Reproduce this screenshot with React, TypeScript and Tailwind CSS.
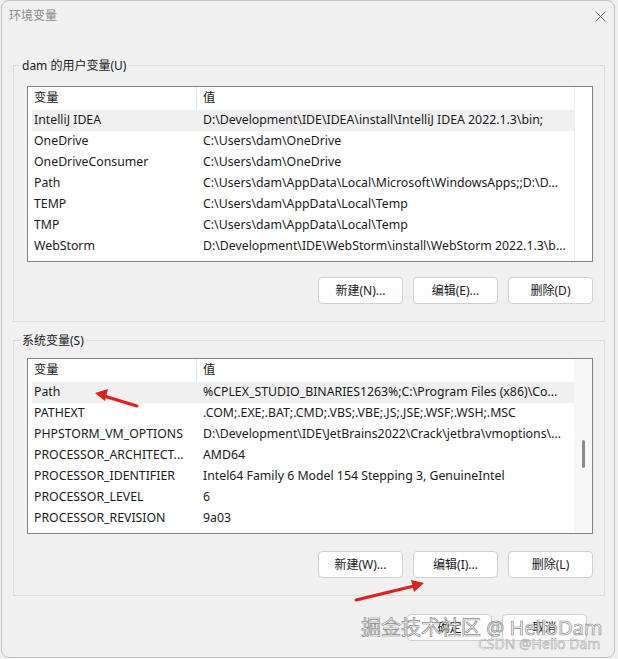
import React from "react";

type Row = { name: string; value: string };

const userVars: Row[] = [
  { name: "IntelliJ IDEA", value: "D:\\Development\\IDE\\IDEA\\install\\IntelliJ IDEA 2022.1.3\\bin;" },
  { name: "OneDrive", value: "C:\\Users\\dam\\OneDrive" },
  { name: "OneDriveConsumer", value: "C:\\Users\\dam\\OneDrive" },
  { name: "Path", value: "C:\\Users\\dam\\AppData\\Local\\Microsoft\\WindowsApps;;D:\\D..." },
  { name: "TEMP", value: "C:\\Users\\dam\\AppData\\Local\\Temp" },
  { name: "TMP", value: "C:\\Users\\dam\\AppData\\Local\\Temp" },
  { name: "WebStorm", value: "D:\\Development\\IDE\\WebStorm\\install\\WebStorm 2022.1.3\\b..." },
];

const systemVars: Row[] = [
  { name: "Path", value: "%CPLEX_STUDIO_BINARIES1263%;C:\\Program Files (x86)\\Co..." },
  { name: "PATHEXT", value: ".COM;.EXE;.BAT;.CMD;.VBS;.VBE;.JS;.JSE;.WSF;.WSH;.MSC" },
  { name: "PHPSTORM_VM_OPTIONS", value: "D:\\Development\\IDE\\JetBrains2022\\Crack\\jetbra\\vmoptions\\..." },
  { name: "PROCESSOR_ARCHITECT...", value: "AMD64" },
  { name: "PROCESSOR_IDENTIFIER", value: "Intel64 Family 6 Model 154 Stepping 3, GenuineIntel" },
  { name: "PROCESSOR_LEVEL", value: "6" },
  { name: "PROCESSOR_REVISION", value: "9a03" },
];

const ListView = ({ rows, scrollbar }: { rows: Row[]; scrollbar?: boolean }) => {
  return (
    <div className="flex h-[176px] w-[566px] border border-[#828282] bg-white text-[12.3px]">
      <div className="flex w-[546px] flex-col">
        {/* header */}
        <div className="flex h-[23px] items-center">
          <div className="flex h-full w-[169px] items-center border-r border-[#e5e5e5] pl-[6px]">变量</div>
          <div className="pl-[6px]">值</div>
        </div>
        {rows.map((row, idx) => (
          <div
            key={idx}
            className={
              idx === 0
                ? "ml-[4px] flex h-[21px] items-center whitespace-nowrap bg-[#f0f0f0] pl-[2px]"
                : "ml-[4px] flex h-[21px] items-center whitespace-nowrap pl-[2px]"
            }
          >
            <div className="w-[169px] overflow-hidden">{row.name}</div>
            <div>{row.value}</div>
          </div>
        ))}
      </div>
      {scrollbar ? (
        <div className="flex w-[18px] justify-center bg-[#f7f7f7] pt-[81px]">
          <div className="h-[28px] w-[3px] rounded-full bg-[#8a8a8a]"></div>
        </div>
      ) : (
        <div className="w-[18px] border-l border-[#eeeeee]"></div>
      )}
    </div>
  );
};

const Button = ({ label }: { label: string }) => (
  <button className="flex h-[27px] w-[85px] items-center justify-center rounded-[4px] border border-[#d0d0d0] bg-[#fdfdfd] text-[#1a1a1a]">
    {label}
  </button>
);

// group box caption sits on top of the border line
const GroupLabel = ({ text }: { text: string }) => (
  <div className="-mt-[9px] flex h-[17px]">
    <span className="ml-[-7px] bg-[#f0f0f0] px-[2px] leading-[17px]">{text}</span>
  </div>
);

export default function App() {
  return (
    <div className="relative h-[659px] w-[618px] overflow-hidden bg-[#f0f0f0] font-['Noto_Sans','Noto_Sans_CJK_SC',sans-serif] text-[12px] text-[#1a1a1a]">
      {/* Dialog window */}
      <div className="ml-[1px] flex h-[658px] w-[614px] flex-col rounded-[8px] border border-[#c4c4c4] bg-[#f0f0f0]">
        {/* Title bar */}
        <div className="flex h-[30px] items-center justify-between pl-[7px] pr-[8px]">
          <span className="text-[#8a8a8a]">环境变量</span>
          <svg width="11" height="11" viewBox="0 0 11 11" className="mt-[1px]">
            <path d="M0.5 0.5 L10.5 10.5 M10.5 0.5 L0.5 10.5" stroke="#6a6a6a" strokeWidth="1" />
          </svg>
        </div>

        {/* User variables */}
        <div className="ml-[11px] mt-[34px] w-[592px] border border-[#dcdcdc] pb-[17px] pl-[13px]">
          <GroupLabel text="dam 的用户变量(U)" />
          <div className="mt-[12px]">
            <ListView rows={userVars} />
          </div>
          <div className="mt-[15px] flex w-[566px] justify-end gap-[10px]">
            <Button label="新建(N)..." />
            <Button label="编辑(E)..." />
            <Button label="删除(D)" />
          </div>
        </div>

        {/* System variables */}
        <div className="ml-[11px] mt-[18px] w-[592px] border border-[#dcdcdc] pb-[17px] pl-[13px]">
          <GroupLabel text="系统变量(S)" />
          <div className="mt-[9px]">
            <ListView rows={systemVars} scrollbar />
          </div>
          <div className="mt-[17px] flex w-[566px] justify-end gap-[10px]">
            <Button label="新建(W)..." />
            <Button label="编辑(I)..." />
            <Button label="删除(L)" />
          </div>
        </div>

        {/* OK / Cancel */}
        <div className="mr-[27px] mt-[18px] flex justify-end gap-[10px]">
          <Button label="确定" />
          <Button label="取消" />
        </div>
      </div>

      {/* Red annotation arrows */}
      <svg className="pointer-events-none absolute left-0 top-0" width="618" height="659">
        <line x1="137" y1="406" x2="104" y2="396" stroke="#e0201c" strokeWidth="3" strokeLinecap="round" />
        <polygon points="95,393 108,389 105,401" fill="#e0201c" />
        <line x1="356" y1="600" x2="414" y2="586" stroke="#e0201c" strokeWidth="3" strokeLinecap="round" />
        <polygon points="424,583 411,580 414,592" fill="#e0201c" />
      </svg>

      {/* Watermarks */}
      <div className="pointer-events-none absolute left-[361px] top-[615px] whitespace-nowrap text-[20px] leading-[26px] text-[rgba(255,255,255,0.75)] [-webkit-text-stroke:0.7px_#8c8c8c]">
        掘金技术社区 @ HelloDam
      </div>
      <div className="pointer-events-none absolute left-[478px] top-[635px] whitespace-nowrap text-[14px] leading-[18px] text-[rgba(255,255,255,0.6)] [-webkit-text-stroke:0.5px_#a0a0a0]">
        CSDN @Hello Dam
      </div>
    </div>
  );
}
